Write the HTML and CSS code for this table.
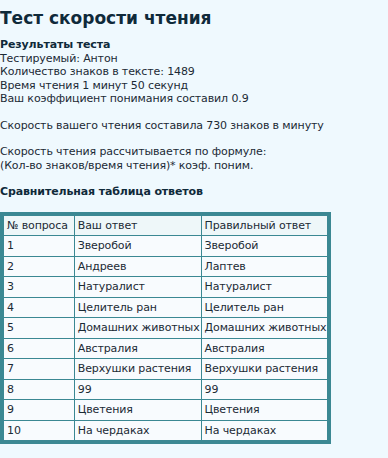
FILE: index.html
```html
<!DOCTYPE html>
<html lang="ru">
<head>
<meta charset="utf-8">
<link rel="stylesheet" href="styles.css">
</head>
<body>
<div class="page">
  <h1 class="title">Тест скорости чтения</h1>
  <div class="block">
    <div class="bold">Результаты теста</div>
    <div>Тестируемый: Антон</div>
    <div>Количество знаков в тексте: 1489</div>
    <div>Время чтения 1 минут 50 секунд</div>
    <div>Ваш коэффициент понимания составил 0.9</div>
  </div>
  <div class="block">Скорость вашего чтения составила 730 знаков в минуту</div>
  <div class="block">
    <div>Скорость чтения рассчитывается по формуле:</div>
    <div>(Кол-во знаков/время чтения)* коэф. поним.</div>
  </div>
  <div class="block bold">Сравнительная таблица ответов</div>
  <table class="answers">
    <thead>
      <tr><th>№ вопроса</th><th>Ваш ответ</th><th>Правильный ответ</th></tr>
    </thead>
    <tbody>
      <tr><td>1</td><td>Зверобой</td><td>Зверобой</td></tr>
      <tr><td>2</td><td>Андреев</td><td>Лаптев</td></tr>
      <tr><td>3</td><td>Натуралист</td><td>Натуралист</td></tr>
      <tr><td>4</td><td>Целитель ран</td><td>Целитель ран</td></tr>
      <tr><td>5</td><td>Домашних животных</td><td>Домашних животных</td></tr>
      <tr><td>6</td><td>Австралия</td><td>Австралия</td></tr>
      <tr><td>7</td><td>Верхушки растения</td><td>Верхушки растения</td></tr>
      <tr><td>8</td><td>99</td><td>99</td></tr>
      <tr><td>9</td><td>Цветения</td><td>Цветения</td></tr>
      <tr><td>10</td><td>На чердаках</td><td>На чердаках</td></tr>
    </tbody>
  </table>
</div>
</body>
</html>
```
FILE: styles.css
```css
html, body {
  margin: 0;
  padding: 0;
  background: #eff9fe;
}
.page {
  font-family: "DejaVu Sans", Verdana, sans-serif;
  font-size: 11px;
  line-height: 13.5px;
  letter-spacing: -0.12px;
  color: #1b2a35;
  padding: 0;
}
.title {
  font-size: 17px;
  line-height: 20px;
  font-weight: bold;
  letter-spacing: 0;
  color: #0f2a3a;
  margin: 8px 0 10px 0;
}
.block {
  margin-bottom: 13px;
}
.bold {
  font-weight: bold;
  color: #0f2a3a;
}
.answers {
  border-collapse: collapse;
  border: 4px solid #3b8893;
  margin-top: 5px;
  font-size: 11px;
}
.answers th,
.answers td {
  border: 1px solid #3b8893;
  padding: 3px 1px 3px 3px;
  height: 13px;
  text-align: left;
  font-weight: normal;
  color: #1b2a35;
  white-space: nowrap;
}
.answers th:first-child,
.answers td:first-child {
  padding-right: 6px;
}
.answers th {
  background: #eef7f9;
}
.answers td {
  background: #f8fbfe;
}
```
